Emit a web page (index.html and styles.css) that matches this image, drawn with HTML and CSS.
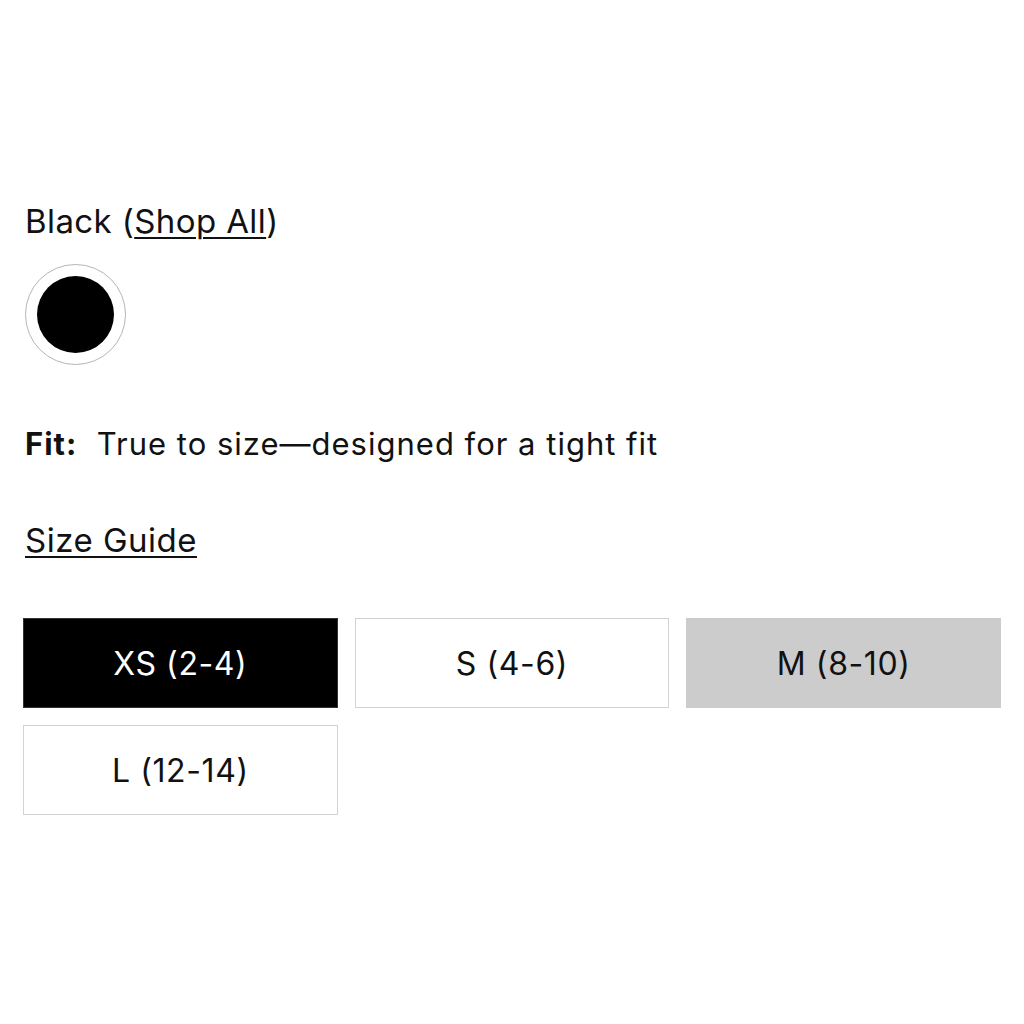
FILE: index.html
```html
<!DOCTYPE html>
<html lang="en">
<head>
<meta charset="utf-8">
<title>Product options</title>
<link rel="stylesheet" href="styles.css">
</head>
<body>
<main class="options">
  <div class="color-label">Black (<a class="link" href="#">Shop All</a>)</div>
  <div class="swatch"><span class="swatch-dot"></span></div>
  <div class="fit"><strong class="fit-key">Fit:</strong>&nbsp; True to size—designed for a tight fit</div>
  <div class="guide"><a class="link" href="#">Size Guide</a></div>
  <div class="sizes">
    <button class="size size-selected">XS (2-4)</button>
    <button class="size">S (4-6)</button>
    <button class="size size-soldout">M (8-10)</button>
    <button class="size">L (12-14)</button>
  </div>
</main>
</body>
</html>
```
FILE: styles.css
```css
html, body {
  margin: 0;
  padding: 0;
  background: #ffffff;
}

body {
  font-family: "Inter", "Open Sans", "Liberation Sans", sans-serif;
  color: #111111;
  width: 1024px;
  height: 1024px;
}

.options {
  display: flex;
  flex-direction: column;
  align-items: flex-start;
  padding: 201px 23px 0 23px;
}

.color-label {
  font-size: 33px;
  line-height: 40px;
  height: 40px;
  padding-left: 2px;
  letter-spacing: 0.4px;
}

.link {
  color: #111111;
  text-decoration: underline;
  text-decoration-thickness: 2px;
  text-underline-offset: 4px;
}

.swatch {
  box-sizing: border-box;
  margin-top: 23px;
  width: 101px;
  height: 101px;
  border: 1.5px solid #b5b5b5;
  border-radius: 50%;
  display: flex;
  align-items: center;
  justify-content: center;
  margin-left: 2px;
}

.swatch-dot {
  width: 77px;
  height: 77px;
  border-radius: 50%;
  background: #000000;
}

.fit {
  margin-top: 59px;
  font-size: 31px;
  line-height: 40px;
  height: 40px;
  padding-left: 2px;
  letter-spacing: 1px;
}

.fit-key {
  font-weight: 700;
}

.guide {
  margin-top: 56px;
  font-size: 33px;
  line-height: 40px;
  height: 40px;
  padding-left: 2px;
  letter-spacing: 0.5px;
}

.sizes {
  margin-top: 58px;
  display: grid;
  grid-template-columns: repeat(3, 1fr);
  gap: 17px;
  width: 978px;
}

.size {
  height: 90px;
  border: 1.5px solid #d3d3d3;
  background: #ffffff;
  color: #111111;
  font-family: "Inter", "Open Sans", "Liberation Sans", sans-serif;
  font-size: 32px;
  letter-spacing: 0.6px;
  padding: 0;
  display: flex;
  align-items: center;
  justify-content: center;
}

.size-selected {
  background: #000000;
  color: #ffffff;
  border-color: #333333;
}

.size-soldout {
  background: #cccccc;
  border-color: #cccccc;
}
```
